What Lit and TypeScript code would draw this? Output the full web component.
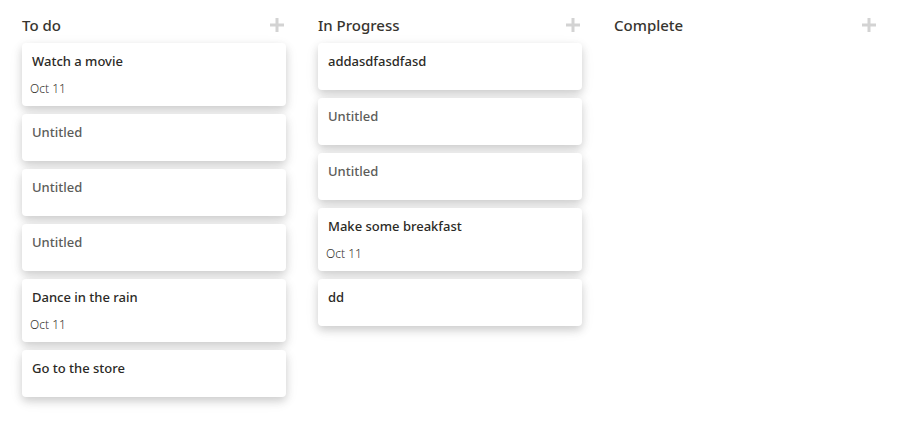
import { LitElement, html, css, nothing } from "lit";
import { customElement, property } from "lit/decorators.js";

interface Task {
  title?: string;
  due?: string;
}

interface Column {
  name: string;
  tasks: Task[];
}

const COLUMNS: Column[] = [
  {
    name: "To do",
    tasks: [
      { title: "Watch a movie", due: "Oct 11" },
      {},
      {},
      {},
      { title: "Dance in the rain", due: "Oct 11" },
      { title: "Go to the store" },
    ],
  },
  {
    name: "In Progress",
    tasks: [
      { title: "addasdfasdfasd" },
      {},
      {},
      { title: "Make some breakfast", due: "Oct 11" },
      { title: "dd" },
    ],
  },
  { name: "Complete", tasks: [] },
];

@customElement("task-card")
export class TaskCard extends LitElement {
  static styles = css`
    :host {
      display: block;
    }
    .card {
      box-sizing: border-box;
      min-height: 47px;
      padding: 8px;
      border-radius: 4px;
      background: #fff;
      box-shadow: 0 4px 8px rgba(0, 0, 0, 0.16), 0 4px 16px rgba(0, 0, 0, 0.06);
    }
    .title {
      margin: 0;
      padding: 0 2px;
      font-size: 13px;
      line-height: 20px;
      font-weight: 500;
      color: #2b2a26;
    }
    .untitled {
      color: #5c5c5a;
    }
    .due {
      display: block;
      margin-top: 8px;
      font-size: 12px;
      line-height: 19px;
      font-weight: 300;
      color: #37352f;
    }
  `;

  @property({ attribute: false }) task: Task = {};

  render() {
    const { title, due } = this.task;
    return html`<article class="card">
      <h3 class="title ${title ? "" : "untitled"}">${title ?? "Untitled"}</h3>
      ${due ? html`<time class="due">${due}</time>` : nothing}
    </article>`;
  }
}

@customElement("app-root")
export class AppRoot extends LitElement {
  static styles = css`
    :host {
      display: block;
      font-family: "Noto Sans", "Open Sans", sans-serif;
      color: #37352f;
    }
    .board {
      display: grid;
      grid-template-columns: repeat(3, minmax(0, 1fr));
      gap: 32px;
      padding: 8px 32px 32px 22px;
    }
    .head {
      display: flex;
      align-items: center;
      justify-content: space-between;
      height: 34px;
      margin-bottom: 1px;
    }
    .name {
      margin: 0;
      font-size: 15px;
      line-height: 24px;
      font-weight: 500;
    }
    .add {
      display: flex;
      padding: 2px;
      border: 0;
      background: none;
      color: #d3d3d3;
      cursor: pointer;
    }
    .list {
      display: grid;
      gap: 8px;
      margin: 0;
      padding: 0;
      list-style: none;
    }
  `;

  render() {
    return html`<main class="board">
      ${COLUMNS.map(
        (column) => html`<section>
          <header class="head">
            <h2 class="name">${column.name}</h2>
            <button class="add" type="button" aria-label="Add to ${column.name}">
              <svg width="14" height="14" viewBox="0 0 14 14" fill="currentColor" aria-hidden="true">
                <path d="M5.5 0h3v5.500H14v3H8.500V14h-3V8.500H0v-3h5.500z" />
              </svg>
            </button>
          </header>
          <ul class="list">
            ${column.tasks.map((task) => html`<li><task-card .task=${task}></task-card></li>`)}
          </ul>
        </section>`,
      )}
    </main>`;
  }
}
